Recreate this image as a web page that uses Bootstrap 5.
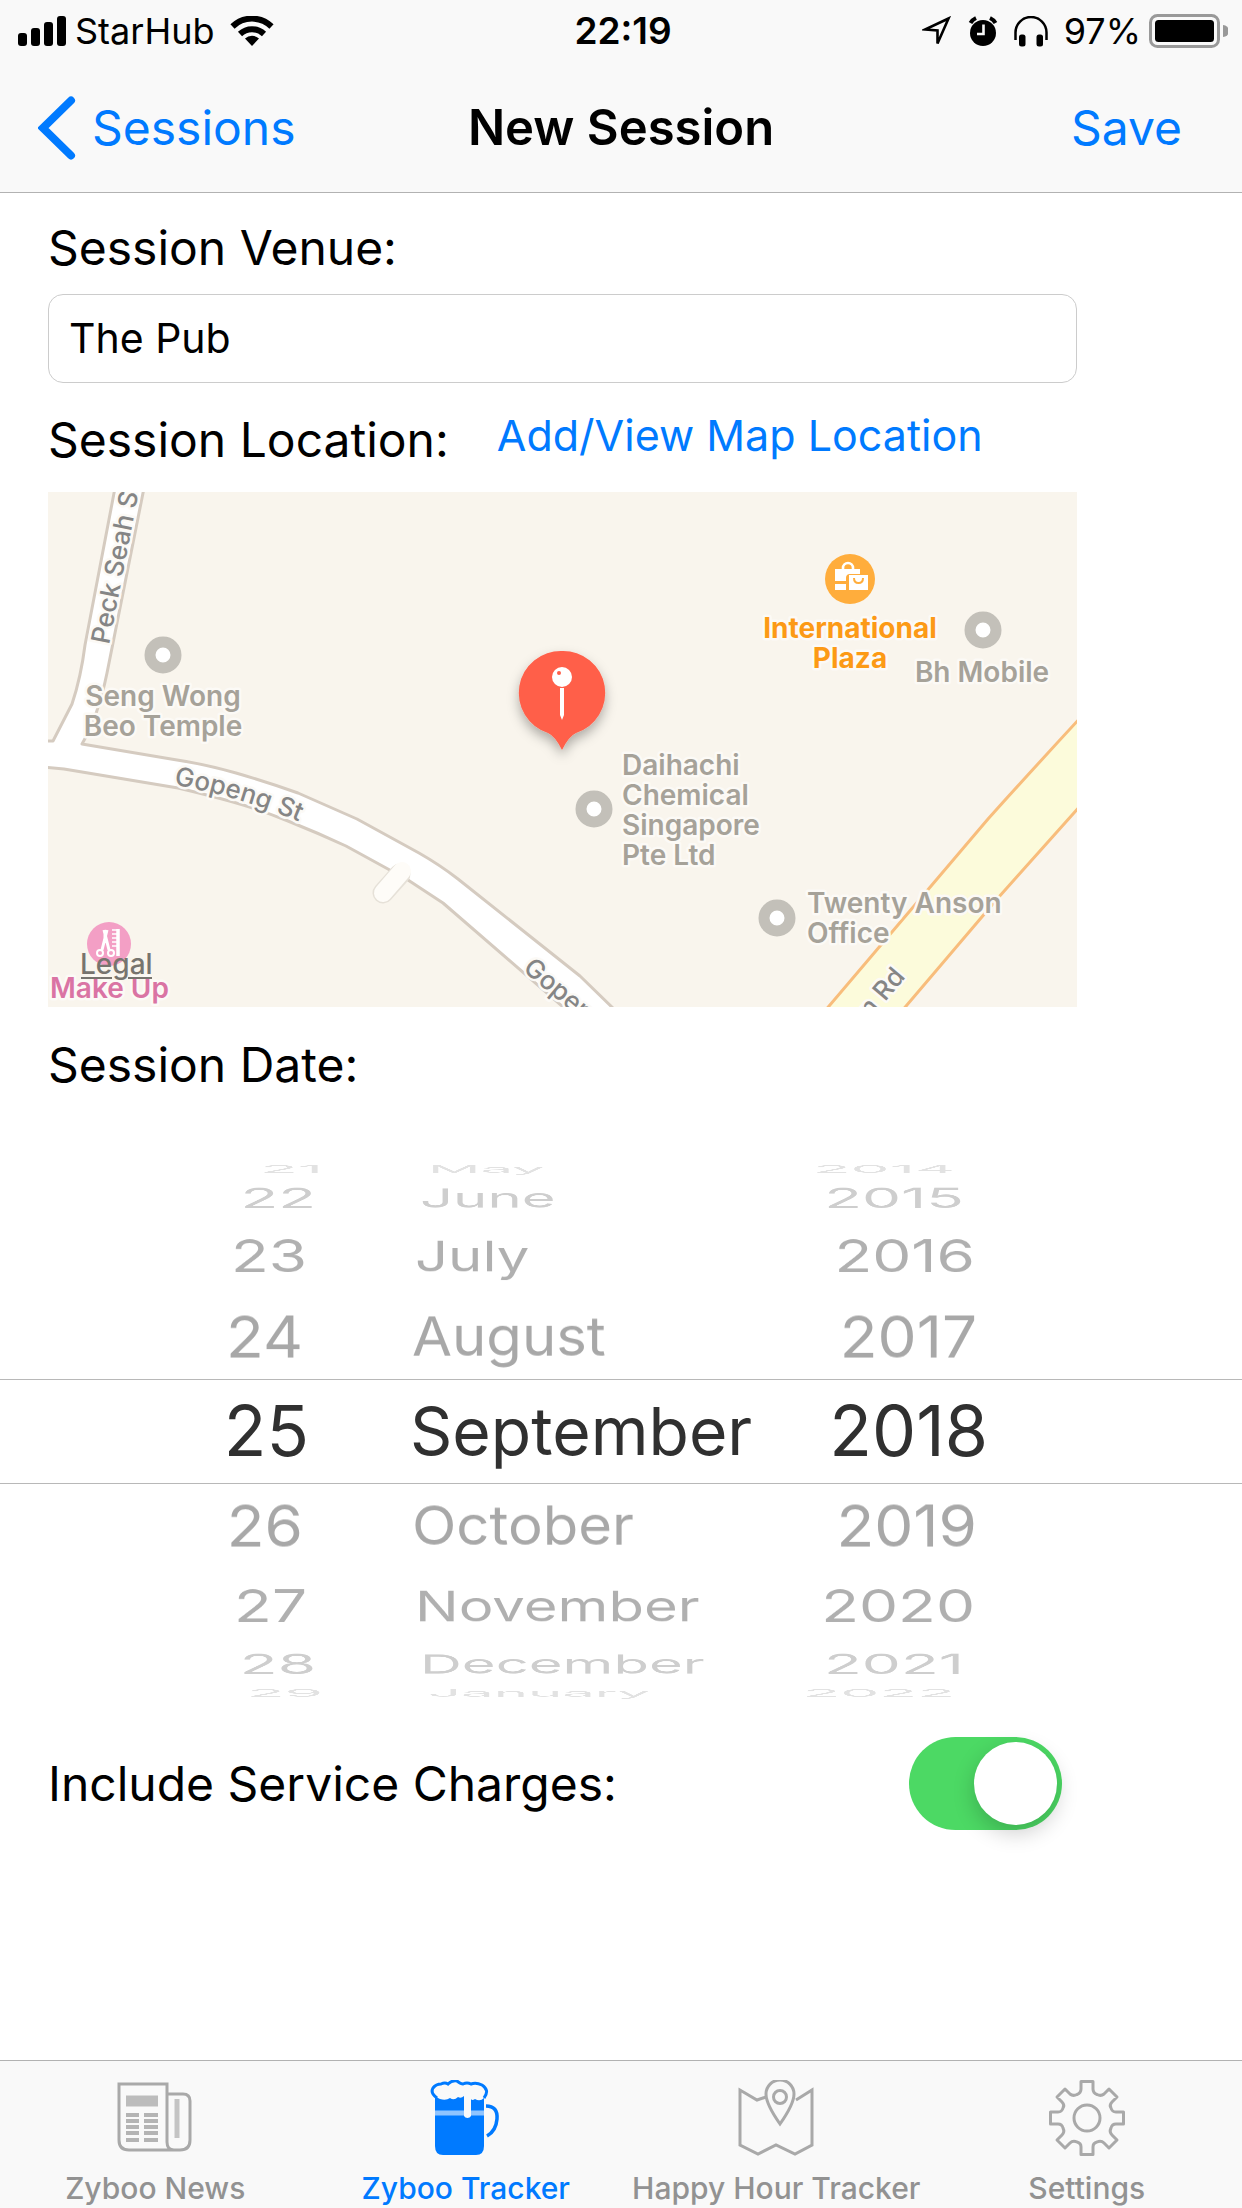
<!DOCTYPE html>
<html lang="en">
<head>
<meta charset="utf-8">
<meta name="viewport" content="width=device-width, initial-scale=1">
<title>New Session</title>
<link href="https://cdn.jsdelivr.net/npm/bootstrap@5.3.0/dist/css/bootstrap.min.css" rel="stylesheet">
<style>
  :root { --tint: #007aff; --bar: #f9f9f9; --hair: #b2b2b2; }
  body { font-family: Inter, "Liberation Sans", sans-serif; color: #000; background: #fff; }
  svg { display: block; flex: none; }
  a, .tint-btn { color: var(--tint); text-decoration: none; }
  .top-area { background: var(--bar); border-bottom: 1px solid var(--hair); }
  .status-row { height: 62px; font-size: 36px; padding: 0 14px 0 18px; }
  .status-row > div, .title-row > div { flex: 1 1 0; }
  .clock { font-size: 37px; }
  .title-row { height: 130px; font-size: 48px; padding: 2px 38px 0; }
  .title-row h1 { font-size: 49px; font-weight: 600; }
  .tint-btn { border: 0; background: none; padding: 0; margin-right: 22px; }
  .form-area { padding: 25px 165px 0 48px; }
  .field-label { font-size: 48px; line-height: 60px; }
  .venue-box { height: 89px; font-size: 41px; padding: 0 20px 2px; border: 1px solid #ccc; border-radius: 15px; color: #000; margin: 16px 0 27px; }
  .map-link { font-size: 43px; line-height: 50px; }
  .map-view { width: 100%; height: auto; margin: 22px 0 28px; font-size: 28px; font-weight: 500; }
  .map-view .halo { paint-order: stroke; stroke: #fcfaf6; stroke-width: 5px; stroke-linejoin: round; }
  .map-view .poi { fill: #a6a299; font-weight: 600; }
  .map-view .street { fill: #858585; font-size: 26px; }

  .wheel { margin-top: 65px; background: linear-gradient(#b8b8b8, #b8b8b8) 0 219px / 100% 1px no-repeat, linear-gradient(#b8b8b8, #b8b8b8) 0 323px / 100% 1px no-repeat; }
  .wheel ul { font-size: 62px; white-space: nowrap; }
  .wheel li { height: var(--h); line-height: var(--h); color: var(--c); transform: rotateX(var(--turn)); }
  .wheel .d0 { --h: 104px; --turn: 0deg; --c: #303030; --day: 21px; --month: 0px; --year: 0px; font-size: 70px; }
  .wheel .d1 { --h: 85px; --turn: 21deg; --c: #a8a8a8; --day: 27px; --month: 2px; --year: 11px; }
  .wheel .d2 { --h: 76px; --turn: 43deg; --c: #b0b0b0; --day: 23px; --month: 5px; --year: 13px; }
  .wheel .d3 { --h: 40px; --turn: 63deg; --c: #cecece; --day: 14px; --month: 10px; --year: 24px; }
  .wheel .d4 { --h: 18px; --turn: 80deg; --c: #e2e2e2; --day: 7px; --month: 18px; --year: 33px; }
  .wheel .col-day { width: 330px; }
  .wheel .col-day li { padding-right: var(--day); }
  .wheel .col-month { width: 380px; margin-left: 80px; font-size: 58px; }
  .wheel .col-month li { padding-left: var(--month); }
  .wheel .col-month .d0 { font-size: 66px; }
  .wheel .col-year { width: 198px; }
  .wheel .col-year li { padding-right: var(--year); }

  .charge-row { padding: 35px 180px 0 48px; }
  .ios-switch.form-check-input { appearance: none; width: 153px; height: 93px; margin: 0; padding: 5px; border: 0; border-radius: 47px; background: #dedede; display: flex; flex: none; }
  .ios-switch.form-check-input::before { content: ""; width: 83px; height: 83px; border-radius: 50%; background: #fff; box-shadow: 0 8px 22px rgba(0,0,0,.2); }
  .ios-switch.form-check-input:checked { background: #4cd964; justify-content: flex-end; }

  .tab-area { height: 148px; background: var(--bar); border-top: 1px solid var(--hair); }
  .tab-area a { flex: 1 1 0; padding-top: 19px; gap: 14px; font-size: 30px; line-height: 36px; font-weight: 500; color: #929292; white-space: nowrap; }
  .tab-area a.active { color: var(--tint); }
</style>
</head>
<body class="d-flex flex-column min-vh-100">

<header class="top-area">
  <div class="status-row d-flex align-items-center">
    <div class="d-flex align-items-center gap-2">
      <svg width="49" height="31" viewBox="0 0 49 31" aria-hidden="true"><rect y="17" width="9" height="13" rx="3"/><rect x="13" y="12" width="9" height="18" rx="3"/><rect x="26" y="6" width="9" height="24" rx="3"/><rect x="39" width="9" height="30" rx="3"/></svg>
      <span>StarHub</span>
      <svg class="ms-2" width="44" height="31" viewBox="0 0 44 31" aria-hidden="true"><g fill="none" stroke="#000" stroke-width="6"><path d="M2.500 10.500A28 28 0 0 1 41.500 10.500"/><path d="M10 18A17.500 17.500 0 0 1 34 18"/></g><path d="M22 30l-7-7.500a10.500 10.500 0 0 1 14 0z"/></svg>
    </div>
    <span class="clock fw-semibold">22:19</span>
    <div class="d-flex align-items-center justify-content-end">
      <svg width="30" height="31" viewBox="0 0 30 31" aria-hidden="true"><path d="M26.500 2.500L3 13.500L15.500 14.500V27.500z" fill="none" stroke="#000" stroke-width="2.600"/></svg>
      <svg class="ms-3" width="30" height="31" viewBox="0 0 30 31" aria-hidden="true"><circle cx="15" cy="17" r="13"/><path d="M2.500 7a12 12 0 0 1 5.500-5M22 2a12 12 0 0 1 5.500 5" fill="none" stroke="#000" stroke-width="4"/><path d="M15.500 8.500V18H9" fill="none" stroke="#f9f9f9" stroke-width="2.600"/></svg>
      <svg class="ms-3" width="34" height="31" viewBox="0 0 34 31" aria-hidden="true"><path d="M1.500 24V16.500a15.500 15.500 0 0 1 31 0V24" fill="none" stroke="#000" stroke-width="2.500"/><rect x="5" y="18.500" width="6.500" height="12" rx="2.500"/><rect x="22.500" y="18.500" width="6.500" height="12" rx="2.500"/></svg>
      <span class="ms-3 me-2">97%</span>
      <svg width="79" height="34" viewBox="0 0 79 34" aria-hidden="true"><rect x="1.500" y="1.500" width="68" height="31" rx="7" fill="none" stroke="#999" stroke-width="3"/><rect x="6" y="6" width="59" height="22" rx="3.500"/><path d="M74 11a6 6 0 0 1 0 12z" fill="#999"/></svg>
    </div>
  </div>
  <nav class="title-row d-flex align-items-center" aria-label="Session">
    <div class="d-flex">
      <a href="#sessions" class="d-flex align-items-center">
        <svg width="38" height="64" viewBox="0 0 38 64" aria-hidden="true"><path d="M33 4.500L5 32l28 27.500" fill="none" stroke="#007aff" stroke-width="8" stroke-linecap="round" stroke-linejoin="miter"/></svg>
        <span class="ms-3">Sessions</span>
      </a>
    </div>
    <h1 class="m-0">New Session</h1>
    <div class="text-end"><button type="button" class="tint-btn">Save</button></div>
  </nav>
</header>

<main>
  <section class="form-area">
    <label class="field-label d-block" for="venue">Session Venue:</label>
    <input class="venue-box form-control" id="venue" type="text" value="The Pub">
    <div class="d-flex align-items-start">
      <span class="field-label">Session Location:</span>
      <a class="map-link ms-5" href="#map">Add/View Map Location</a>
    </div>
    <svg class="map-view" id="map" viewBox="0 0 1029 515" role="group" aria-label="Map">
      <rect width="1029" height="515" fill="#f9f5ed"/>
      <g stroke="#d5cbc0" stroke-width="3" fill="#fff" stroke-linejoin="round">
        <path d="M-4 249H5L24 212Q33 185 37 153L67 -4H96L59 181Q50 225 34 252L123 267Q157 272 188 281T250 301L309 327L371 361Q392 373 410 387L532 484L570 521H522L395 411L360 388L298 354Q270 341 240 329T185 310T130 296L16 277L-4 275z"/>
      </g>
      <path d="M352 382L335 401" stroke="#e6e1d8" stroke-width="21" stroke-linecap="round"/>
      <path d="M354 379L335 401" stroke="#fefcf8" stroke-width="18" stroke-linecap="round"/>
      <path d="M1034 224Q985 277 940 327L776 520H853L950 406L1034 312z" fill="#fcfbdb" stroke="#f8bd7c" stroke-width="3"/>
      <g class="street halo">
        <text transform="translate(61 153) rotate(-79)">Peck Seah St</text>
        <path id="gopeng" d="M126 293Q195 304 275 340" fill="none" stroke="none"/>
        <text><textPath href="#gopeng">Gopeng St</textPath></text>
        <text transform="translate(474 478) rotate(40)">Gopeng St</text>
        <text transform="translate(858 485) rotate(-50)" text-anchor="end">Anson Rd</text>
      </g>
      <g fill="#fff" stroke="#c3c0b9" stroke-width="11">
        <circle cx="115" cy="163" r="13"/><circle cx="546" cy="317" r="13"/><circle cx="935" cy="138" r="13"/><circle cx="729" cy="426" r="13"/>
      </g>
      <g class="poi halo">
        <text text-anchor="middle"><tspan x="115" y="214">Seng Wong</tspan><tspan x="115" y="244">Beo Temple</tspan></text>
        <text><tspan x="574" y="283">Daihachi</tspan><tspan x="574" y="313">Chemical</tspan><tspan x="574" y="343">Singapore</tspan><tspan x="574" y="373">Pte Ltd</tspan></text>
        <text x="934" y="190" text-anchor="middle">Bh Mobile</text>
        <text><tspan x="759" y="421">Twenty Anson</tspan><tspan x="759" y="451">Office</tspan></text>
      </g>
      <circle cx="802" cy="87" r="25" fill="#ffad3c"/>
      <path d="M787 77h25v5h-10q-4 0-4 4v3h-11zM787 92h11v6h-11zM801 83h19v15h-19z" fill="#fff"/>
      <path d="M795 78v-2a5 5 0 0 1 10 0v2" fill="none" stroke="#fff" stroke-width="2.600"/>
      <path d="M806 86q0 5 4.500 5t4.500-5" fill="none" stroke="#ffad3c" stroke-width="2"/>
      <text class="halo" text-anchor="middle" fill="#fc9a16" font-weight="700"><tspan x="802" y="146">International</tspan><tspan x="802" y="176">Plaza</tspan></text>
      <circle cx="61" cy="452" r="22" fill="#f39fc5"/>
      <g stroke="#fff" fill="none" stroke-width="2">
        <circle cx="52" cy="461" r="3"/><circle cx="63" cy="461" r="3"/><path d="M54 458l5-20M61 458l-5-20M57 439v12" stroke-width="3"/><path d="M70 437v27" stroke-width="3.500"/><path d="M64 438h6M64 442h6M64 446h6M64 450h6M64 454h6" stroke-width="1.600"/>
      </g>
      <text class="halo" x="2" y="506" fill="#da74a4" font-weight="600">Make Up</text>
      <a href="#legal"><text x="32" y="482" fill="#77746e">Legal</text><path d="M33 486H64M80 486H104" stroke="#77746e" stroke-width="2"/></a>
      <defs><filter id="pin-shadow" x="-30%" y="-30%" width="160%" height="160%"><feDropShadow dx="0" dy="6" stdDeviation="6" flood-opacity=".3"/></filter></defs>
      <path filter="url(#pin-shadow)" d="M514 159a42 42 0 0 1 14 82q-7 3-14 17q-7-14-14-17a42 42 0 0 1 14-82z" fill="#ff5e49"/>
      <circle cx="514" cy="185" r="10" fill="#fff"/><circle cx="511" cy="181" r="2" fill="#ff5e49"/><path d="M512 196h4v27l-2 5l-2-5z" fill="#fff"/>
    </svg>
    <div class="field-label" id="date-label">Session Date:</div>
  </section>

  <div class="wheel d-flex" role="group" aria-labelledby="date-label">
    <ul class="col-day list-unstyled mb-0 text-end flex-shrink-0" role="listbox" aria-label="Day">
      <li class="d4" role="option">21</li><li class="d3" role="option">22</li><li class="d2" role="option">23</li><li class="d1" role="option">24</li>
      <li class="d0" role="option" aria-selected="true">25</li>
      <li class="d1" role="option">26</li><li class="d2" role="option">27</li><li class="d3" role="option">28</li><li class="d4" role="option">29</li>
    </ul>
    <ul class="col-month list-unstyled mb-0" role="listbox" aria-label="Month">
      <li class="d4" role="option">May</li><li class="d3" role="option">June</li><li class="d2" role="option">July</li><li class="d1" role="option">August</li>
      <li class="d0" role="option" aria-selected="true">September</li>
      <li class="d1" role="option">October</li><li class="d2" role="option">November</li><li class="d3" role="option">December</li><li class="d4" role="option">January</li>
    </ul>
    <ul class="col-year list-unstyled mb-0 text-end" role="listbox" aria-label="Year">
      <li class="d4" role="option">2014</li><li class="d3" role="option">2015</li><li class="d2" role="option">2016</li><li class="d1" role="option">2017</li>
      <li class="d0" role="option" aria-selected="true">2018</li>
      <li class="d1" role="option">2019</li><li class="d2" role="option">2020</li><li class="d3" role="option">2021</li><li class="d4" role="option">2022</li>
    </ul>
  </div>

  <div class="charge-row d-flex align-items-center justify-content-between">
    <label class="field-label" for="charges">Include Service Charges:</label>
    <input class="ios-switch form-check-input" id="charges" type="checkbox" role="switch" checked>
  </div>
</main>

<nav class="tab-area d-flex mt-auto" aria-label="Tabs">
  <a href="#news" class="d-flex flex-column align-items-center">
    <svg width="76" height="76" viewBox="0 0 76 76" fill="none" stroke="#a9a9a9" stroke-width="3" aria-hidden="true"><path d="M2 4H50V62Q50 70 57 70H12Q2 70 2 60z"/><path d="M50 14H66Q73 14 73 21V60Q73 70 63 70H57"/><path d="M60 19V58" stroke-width="5" stroke="#c4c4c4"/><path d="M9 21H41" stroke-width="11" stroke="#bcbcbc"/><path d="M9 35H22M9 41H22M9 47H22M9 53H22M9 60H22M27 35H41M27 41H41M27 47H41M27 53H41M27 60H41" stroke-width="4" stroke="#b4b4b4"/></svg>
    <span>Zyboo News</span>
  </a>
  <a href="#tracker" class="active d-flex flex-column align-items-center" aria-current="page">
    <svg width="76" height="76" viewBox="0 0 76 76" aria-hidden="true"><path d="M7 16H56V66Q56 75 48 75H15Q7 75 7 66z" fill="#007aff"/><path d="M7 33H56" stroke="#8fc4ff" stroke-width="5"/><path d="M12 19a7 7 0 0 1-1-13q4-2 7 0q4-5 10-3q4 3 7 3q4-2 9 0q5-3 10 1q7 5 2 11q-4 4-9 1q-3 2-4 0V36a4 4 0 0 1-7 0V16q-3 3-6 1q-4 4-8 1q-4 3-10 1z" fill="#f9f9f9"/><path d="M9 18q-7-5-4-10q3-4 8-4q4-2 7 0q4-4 9-3q4 3 6 3q4-2 8 0q5-2 11 1q8 5 2 13" fill="none" stroke="#007aff" stroke-width="3"/><path d="M58 26Q70 26 69 39Q68 51 59 56" fill="none" stroke="#007aff" stroke-width="3.500"/></svg>
    <span>Zyboo Tracker</span>
  </a>
  <a href="#happy-hour" class="d-flex flex-column align-items-center">
    <svg width="76" height="76" viewBox="0 0 76 76" fill="none" stroke="#a9a9a9" stroke-width="3" aria-hidden="true"><path d="M28 17L19 20L2 10V65L20 74L38 65L57 74L74 65V10L58 20"/><path d="M42 44Q28 24 28 14a14 14 0 0 1 28 0Q56 24 42 44z"/><circle cx="42" cy="17" r="6.500"/></svg>
    <span>Happy Hour Tracker</span>
  </a>
  <a href="#settings" class="d-flex flex-column align-items-center">
    <svg width="76" height="76" viewBox="0 0 76 76" fill="none" stroke="#a9a9a9" stroke-width="3" stroke-linejoin="round" aria-hidden="true"><path d="M32 1.500H44V9Q44 13 48 14.500Q52 16.500 55 14L60 9L68 17L63 22Q60 25 62 28Q63 32 67 32H74.500V44H67Q63 44 62 48Q60 52 63 55L68 60L60 68L55 63Q52 60 48 62Q44 63 44 67V74.500H32V67Q32 63 28 62Q24 60 21 63L16 68L8 60L13 55Q16 52 14 48Q13 44 9 44H1.500V32H9Q13 32 14 28Q16 25 13 22L8 17L16 9L21 14Q24 16.500 28 14.500Q32 13 32 9z"/><circle cx="38" cy="38" r="13"/></svg>
    <span>Settings</span>
  </a>
</nav>

<script src="https://cdn.jsdelivr.net/npm/bootstrap@5.3.0/dist/js/bootstrap.bundle.min.js"></script>
</body>
</html>
